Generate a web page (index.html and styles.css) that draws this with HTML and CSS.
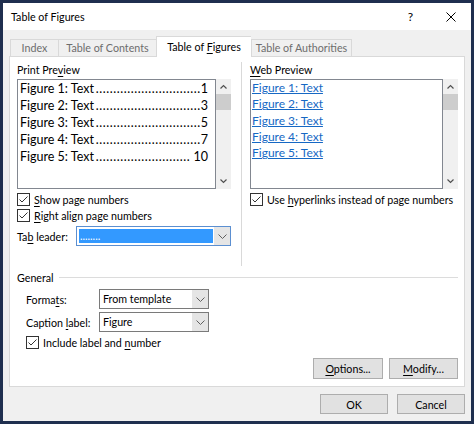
FILE: index.html
```html
<!DOCTYPE html>
<html lang="en">
<head>
    <meta charset="UTF-8">
    <title>Table of Figures</title>
    <link rel="stylesheet" href="styles.css">
</head>
<body>

    <div class="dialog">
        <!-- title bar -->
        <div class="titlebar">
            <span class="title">Table of Figures</span>
            <div class="title-actions">
                <span class="help">?</span>
                <svg class="close" width="10" height="10" viewBox="0 0 10 10">
                    <path d="M0.5 0.5 L9.5 9.5 M9.5 0.5 L0.5 9.5" stroke="#000" stroke-width="1" fill="none"/>
                </svg>
            </div>
        </div>

        <div class="dialog-body">
            <!-- tabs -->
            <div class="tabs">
                <div class="tab tab-index">Index</div>
                <div class="tab tab-toc">Table of Contents</div>
                <div class="tab tab-figures active">Table of <u>F</u>igures</div>
                <div class="tab tab-auth">Table of Authorities</div>
            </div>

            <div class="panel">
                <div class="columns">
                    <!-- print preview -->
                    <div class="col col-left">
                        <div class="field-label">Print Pre<u>v</u>iew</div>
                        <div class="preview">
                            <div class="preview-box print">
                                <div class="entry"><span class="caption">Figure 1: Text</span><span class="leader">..............................</span><span class="page">1</span></div>
                                <div class="entry"><span class="caption">Figure 2: Text</span><span class="leader">..............................</span><span class="page">3</span></div>
                                <div class="entry"><span class="caption">Figure 3: Text</span><span class="leader">..............................</span><span class="page">5</span></div>
                                <div class="entry"><span class="caption">Figure 4: Text</span><span class="leader">..............................</span><span class="page">7</span></div>
                                <div class="entry"><span class="caption">Figure 5: Text</span><span class="leader">...........................</span><span class="page">&nbsp;10</span></div>
                            </div>
                            <div class="scrollbar">
                                <div class="scroll-btn">
                                    <svg width="7" height="5" viewBox="0 0 7 5"><polyline points="0.5,4.5 3.5,1.5 6.5,4.5" fill="none" stroke="#505050" stroke-width="1.2"/></svg>
                                </div>
                                <div class="scroll-thumb"></div>
                                <div class="scroll-track"></div>
                                <div class="scroll-btn">
                                    <svg width="7" height="5" viewBox="0 0 7 5"><polyline points="0.5,0.5 3.5,3.5 6.5,0.5" fill="none" stroke="#505050" stroke-width="1.2"/></svg>
                                </div>
                            </div>
                        </div>

                        <div class="check first">
                            <svg class="check-box" width="13" height="13" viewBox="0 0 13 13"><rect x="0.5" y="0.5" width="12" height="12" fill="#fff" stroke="#333"/><path d="M2.5 6.5 L5 9 L10.5 3.5" fill="none" stroke="#333" stroke-width="1"/></svg>
                            <span><u>S</u>how page numbers</span>
                        </div>
                        <div class="check">
                            <svg class="check-box" width="13" height="13" viewBox="0 0 13 13"><rect x="0.5" y="0.5" width="12" height="12" fill="#fff" stroke="#333"/><path d="M2.5 6.5 L5 9 L10.5 3.5" fill="none" stroke="#333" stroke-width="1"/></svg>
                            <span><u>R</u>ight align page numbers</span>
                        </div>

                        <div class="leader-row">
                            <span class="row-label">Ta<u>b</u> leader:</span>
                            <div class="combo combo-focus">
                                <span class="combo-value selected">........</span>
                                <span class="combo-btn">
                                    <svg width="9" height="5" viewBox="0 0 9 5"><polyline points="0.5,0.5 4.5,4.5 8.5,0.5" fill="none" stroke="#606060" stroke-width="1"/></svg>
                                </span>
                            </div>
                        </div>
                    </div>

                    <div class="divider"></div>

                    <!-- web preview -->
                    <div class="col col-right">
                        <div class="field-label"><u>W</u>eb Preview</div>
                        <div class="preview">
                            <div class="preview-box web">
                                <a href="#">Figure 1: Text</a>
                                <a href="#">Figure 2: Text</a>
                                <a href="#">Figure 3: Text</a>
                                <a href="#">Figure 4: Text</a>
                                <a href="#">Figure 5: Text</a>
                            </div>
                            <div class="scrollbar">
                                <div class="scroll-btn">
                                    <svg width="7" height="5" viewBox="0 0 7 5"><polyline points="0.5,4.5 3.5,1.5 6.5,4.5" fill="none" stroke="#505050" stroke-width="1.2"/></svg>
                                </div>
                                <div class="scroll-thumb"></div>
                                <div class="scroll-track"></div>
                                <div class="scroll-btn">
                                    <svg width="7" height="5" viewBox="0 0 7 5"><polyline points="0.5,0.5 3.5,3.5 6.5,0.5" fill="none" stroke="#505050" stroke-width="1.2"/></svg>
                                </div>
                            </div>
                        </div>

                        <div class="check first">
                            <svg class="check-box" width="13" height="13" viewBox="0 0 13 13"><rect x="0.5" y="0.5" width="12" height="12" fill="#fff" stroke="#333"/><path d="M2.5 6.5 L5 9 L10.5 3.5" fill="none" stroke="#333" stroke-width="1"/></svg>
                            <span>Use <u>h</u>yperlinks instead of page numbers</span>
                        </div>
                    </div>
                </div>

                <!-- general group -->
                <div class="general">
                    <div class="group-title">
                        <span>General</span>
                        <span class="rule"></span>
                    </div>
                    <div class="form-row">
                        <span class="form-label">Forma<u>t</u>s:</span>
                        <div class="combo combo-small">
                            <span class="combo-value">From template</span>
                            <span class="combo-btn">
                                <svg width="9" height="5" viewBox="0 0 9 5"><polyline points="0.5,0.5 4.5,4.5 8.5,0.5" fill="none" stroke="#606060" stroke-width="1"/></svg>
                            </span>
                        </div>
                    </div>
                    <div class="form-row">
                        <span class="form-label">Caption <u>l</u>abel:</span>
                        <div class="combo combo-small">
                            <span class="combo-value">Figure</span>
                            <span class="combo-btn">
                                <svg width="9" height="5" viewBox="0 0 9 5"><polyline points="0.5,0.5 4.5,4.5 8.5,0.5" fill="none" stroke="#606060" stroke-width="1"/></svg>
                            </span>
                        </div>
                    </div>
                    <div class="check include">
                        <svg class="check-box" width="13" height="13" viewBox="0 0 13 13"><rect x="0.5" y="0.5" width="12" height="12" fill="#fff" stroke="#333"/><path d="M2.5 6.5 L5 9 L10.5 3.5" fill="none" stroke="#333" stroke-width="1"/></svg>
                        <span>Include label and <u>n</u>umber</span>
                    </div>
                </div>

                <div class="panel-buttons">
                    <button class="btn btn-options"><u>O</u>ptions...</button>
                    <button class="btn btn-modify"><u>M</u>odify...</button>
                </div>
            </div>

            <!-- OK / Cancel -->
            <div class="dialog-buttons">
                <button class="btn btn-main">OK</button>
                <button class="btn btn-main">Cancel</button>
            </div>
        </div>
    </div>

</body>
</html>
```

FILE: styles.css
```css
/* base */
* {
    box-sizing: border-box;
}

body {
    margin: 0;
    font-family: "Segoe UI", Lato, "Noto Sans", sans-serif;
    font-size: 10.7px;
    color: #000;
    background-color: #1f2f4f;
}

u {
    text-decoration-thickness: 1px;
    text-underline-offset: 2px;
}

/* window frame */
.dialog {
    width: 474px;
    height: 424px;
    border: 3px solid #1f2f4f;
    background-color: #f0f0f0;
    display: flex;
    flex-direction: column;
}

.titlebar {
    height: 27px;
    background-color: #fff;
    display: flex;
    align-items: center;
    justify-content: space-between;
    padding: 0 15px 0 8px;
}

.title {
    font-size: 10.7px;
}

.title-actions {
    display: flex;
    align-items: center;
    gap: 33px;
}

.help {
    font-size: 12px;
}

.dialog-body {
    flex: 1;
    display: flex;
    flex-direction: column;
    padding: 6px 6px 0 6px;
}

/* tabs */
.tabs {
    display: flex;
    align-items: flex-end;
    padding-left: 1px;
    margin-bottom: -1px;
}

.tab {
    height: 18px;
    line-height: 16px;
    border: 1px solid #d9d9d9;
    border-right: none;
    color: #6d6d6d;
    text-align: center;
    white-space: nowrap;
}
.tab-index   { width: 48px; }
.tab-toc     { width: 98px; }
.tab-figures { width: 95px; }
.tab-auth    { width: 101px; border-right: 1px solid #d9d9d9; }

.tab.active {
    position: relative;
    z-index: 1;
    height: 21px;
    line-height: 19px;
    background-color: #fff;
    border-bottom: none;
    color: #000;
}

/* main panel */
.panel {
    height: 331px;
    background-color: #fff;
    border: 1px solid #d9d9d9;
    display: flex;
    flex-direction: column;
    padding: 5px 6px 0 7px;
}

.columns {
    display: flex;
    height: 204px;
}

.col-left {
    width: 214px;
}

.col-right {
    flex: 1;
}

.divider {
    width: 1px;
    background-color: #d9d9d9;
    margin: 0 8px 0 10px;
}

.field-label {
    height: 17px;
    line-height: 15px;
}

/* preview list boxes */
.preview {
    display: flex;
    height: 110px;
}

.preview-box {
    flex: 1;
    min-width: 0;
    border: 1px solid #828790;
    overflow: hidden;
}

.print {
    padding: 0 7px 0 2px;
    font-size: 12.5px;
    line-height: 17px;
}

.entry {
    display: flex;
    white-space: nowrap;
}

.caption,
.page {
    flex-shrink: 0;
}

.leader {
    flex: 1;
    min-width: 0;
    text-align: right;
    letter-spacing: 0.55px;
}

.web {
    padding: 0 1px;
    font-size: 12px;
    line-height: 16.3px;
}

.web a {
    display: block;
    color: #1668c4;
    text-decoration-thickness: 1px;
    text-underline-offset: 1px;
}

.scrollbar {
    width: 15px;
    flex-shrink: 0;
    background-color: #f0f0f0;
    display: flex;
    flex-direction: column;
}

.scroll-btn {
    height: 15px;
    display: flex;
    align-items: center;
    justify-content: center;
}

.scroll-btn svg {
    display: block;
}

.scroll-thumb {
    height: 16px;
    background-color: #cdcdcd;
}

.scroll-track {
    flex: 1;
}

/* check boxes */
.check {
    display: flex;
    align-items: center;
    gap: 4px;
    height: 16px;
    white-space: nowrap;
}

.check.first {
    margin-top: 2px;
}

.check-box {
    display: block;
    flex-shrink: 0;
}

/* combos */
.leader-row {
    display: flex;
    align-items: center;
    margin-top: 3px;
}

.row-label {
    width: 59px;
}

.combo {
    display: flex;
    height: 20px;
    border: 1px solid #7a7a7a;
    background-color: #fff;
}

.combo-focus {
    flex: 1;
    border-color: #5b8fd1;
}

.combo-small {
    width: 110px;
}

.combo-value {
    flex: 1;
    padding-left: 3px;
    line-height: 18px;
    white-space: nowrap;
}

.combo-value.selected {
    margin: 2px 1px 2px 2px;
    padding-left: 1px;
    line-height: 13px;
    background-color: #3399ff;
    color: #fff;
}

.combo-btn {
    width: 16px;
    background-color: #e5e5e5;
    display: flex;
    align-items: center;
    justify-content: center;
}

/* general group */
.general {
    margin-top: 3px;
}

.group-title {
    display: flex;
    align-items: center;
    gap: 5px;
    height: 16px;
}

.rule {
    flex: 1;
    height: 1px;
    background-color: #dcdcdc;
}

.form-row {
    display: flex;
    align-items: center;
    padding-left: 9px;
    margin-top: 4px;
}

.form-row + .form-row {
    margin-top: 3px;
}

.form-label {
    width: 73px;
}

.check.include {
    margin-top: 2px;
    margin-left: 9px;
}

/* buttons */
.btn {
    height: 21px;
    padding: 0;
    font-family: inherit;
    font-size: 10.7px;
    color: #000;
    background-color: #e1e1e1;
    border: 1px solid #adadad;
}

.panel-buttons {
    margin-top: auto;
    margin-bottom: 7px;
    display: flex;
    justify-content: flex-end;
    gap: 6px;
}

.btn-options { width: 70px; }
.btn-modify  { width: 69px; }

.dialog-buttons {
    display: flex;
    justify-content: flex-end;
    gap: 9px;
    margin-top: 7px;
}

.btn-main {
    width: 68px;
    height: 20px;
}
```
